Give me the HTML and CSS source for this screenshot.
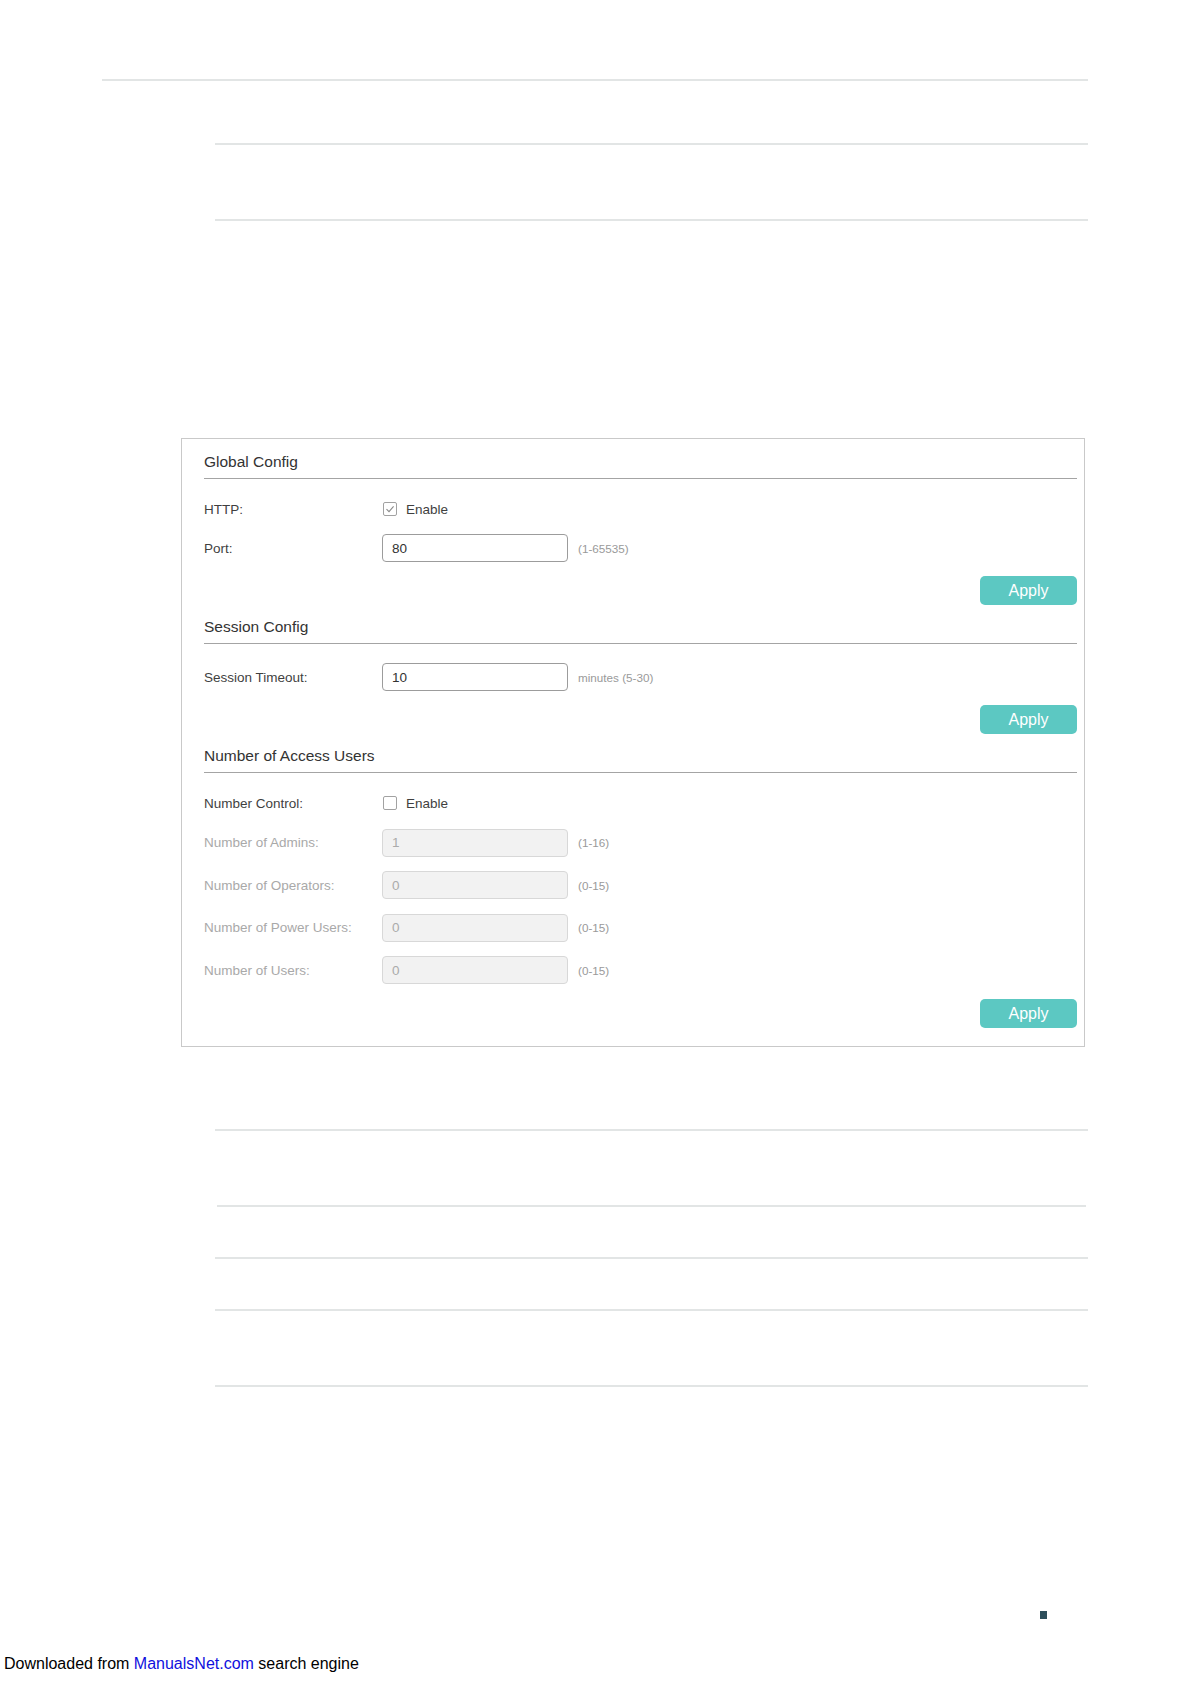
FILE: index.html
```html
<!DOCTYPE html>
<html lang="en">
<head>
<meta charset="utf-8">
<title>HTTP Config</title>
<link rel="stylesheet" href="styles.css">
</head>
<body>
<div class="page">
  <div class="rule rule-wide"></div>
  <div class="rule rule-indent gap-62"></div>
  <div class="rule rule-indent gap-74"></div>

  <div class="panel">
    <section class="section first">
      <h2 class="section-title">Global Config</h2>
      <div class="fields">
        <div class="row check-row">
          <span class="label">HTTP:</span>
          <label class="check">
            <span class="box checked">
              <svg viewBox="0 0 14 14" width="14" height="14"><path d="M3.5 7.2 L6 9.6 L10.6 4.4" fill="none" stroke="#8a8a8a" stroke-width="1.1"/></svg>
            </span>
            <span class="check-text">Enable</span>
          </label>
        </div>
        <div class="row">
          <span class="label">Port:</span>
          <span class="input">80</span>
          <span class="hint">(1-65535)</span>
        </div>
      </div>
      <div class="actions"><button class="apply">Apply</button></div>
    </section>

    <section class="section">
      <h2 class="section-title">Session Config</h2>
      <div class="fields">
        <div class="row">
          <span class="label">Session Timeout:</span>
          <span class="input">10</span>
          <span class="hint">minutes (5-30)</span>
        </div>
      </div>
      <div class="actions"><button class="apply">Apply</button></div>
    </section>

    <section class="section">
      <h2 class="section-title">Number of Access Users</h2>
      <div class="fields loose">
        <div class="row check-row">
          <span class="label">Number Control:</span>
          <label class="check">
            <span class="box"></span>
            <span class="check-text">Enable</span>
          </label>
        </div>
        <div class="row disabled">
          <span class="label">Number of Admins:</span>
          <span class="input">1</span>
          <span class="hint">(1-16)</span>
        </div>
        <div class="row disabled">
          <span class="label">Number of Operators:</span>
          <span class="input">0</span>
          <span class="hint">(0-15)</span>
        </div>
        <div class="row disabled">
          <span class="label">Number of Power Users:</span>
          <span class="input">0</span>
          <span class="hint">(0-15)</span>
        </div>
        <div class="row disabled">
          <span class="label">Number of Users:</span>
          <span class="input">0</span>
          <span class="hint">(0-15)</span>
        </div>
      </div>
      <div class="actions last"><button class="apply">Apply</button></div>
    </section>
  </div>

  <div class="rule rule-indent gap-82"></div>
  <div class="rule rule-indent rule-short gap-74"></div>
  <div class="rule rule-indent gap-50"></div>
  <div class="rule rule-indent gap-50"></div>
  <div class="rule rule-indent gap-74"></div>

  <div class="page-mark"></div>

  <p class="footer">Downloaded from <a href="#" class="footer-link">ManualsNet.com</a> search engine</p>
</div>
</body>
</html>
```

FILE: styles.css
```css
* { box-sizing: border-box; }

html, body {
  margin: 0;
  padding: 0;
  background: #ffffff;
}

body {
  font-family: "Liberation Sans", Arial, sans-serif;
  color: #333333;
}

.page {
  width: 1191px;
  min-height: 1684px;
  padding-top: 79px;
  display: flex;
  flex-direction: column;
}

.rule {
  height: 2px;
  background: #e2e5e5;
  flex: none;
}

.rule-wide {
  margin-left: 102px;
  width: 986px;
}

.rule-indent {
  margin-left: 215px;
  width: 873px;
}

.rule-indent.rule-short {
  margin-left: 217px;
  width: 869px;
}

.gap-50 { margin-top: 50px; }
.gap-62 { margin-top: 62px; }
.gap-74 { margin-top: 74px; }
.gap-82 { margin-top: 82px; }

/* panel */
.panel {
  margin-top: 217px;
  margin-left: 181px;
  width: 904px;
  border: 1px solid #c9c9c9;
  padding: 0 7px 18px 22px;
  display: flex;
  flex-direction: column;
}

.section {
  display: flex;
  flex-direction: column;
  margin-top: 12px;
}

.section.first {
  margin-top: 13px;
}

.section-title {
  margin: 0;
  font-size: 15.5px;
  font-weight: normal;
  line-height: 20px;
  color: #333333;
  padding-bottom: 6px;
  border-bottom: 1px solid #a4a4a4;
}

.fields {
  margin-top: 19px;
  display: flex;
  flex-direction: column;
  gap: 14px;
}

.fields.loose {
  gap: 14.5px;
}

.row {
  display: flex;
  align-items: center;
  height: 28px;
  font-size: 13.5px;
}

.row.check-row {
  height: 22px;
}

.label {
  width: 178px;
  flex: none;
  color: #3f3f3f;
}

.input {
  width: 186px;
  height: 28px;
  flex: none;
  border: 1px solid #9c9c9c;
  border-radius: 4px;
  padding: 0 9px;
  display: flex;
  align-items: center;
  color: #333333;
  font-size: 13.5px;
}

.hint {
  margin-left: 10px;
  font-size: 11.7px;
  color: #9a9a9a;
}

.row.disabled .label {
  color: #a9a9a9;
}

.row.disabled .input {
  background: #f2f2f2;
  border-color: #d8d8d8;
  color: #ababab;
}

.check {
  display: flex;
  align-items: center;
  margin-left: 1px;
}

.box {
  width: 14px;
  height: 14px;
  border: 1px solid #a2a2a2;
  border-radius: 2px;
  display: flex;
  align-items: center;
  justify-content: center;
  overflow: hidden;
}

.box svg {
  display: block;
  flex: none;
}

.check-text {
  margin-left: 9px;
  color: #3f3f3f;
  font-size: 13.5px;
}

.actions {
  margin-top: 14px;
  display: flex;
  justify-content: flex-end;
}

.actions.last {
  margin-top: 15px;
}

.apply {
  width: 97px;
  height: 29px;
  border: none;
  border-radius: 5px;
  background: #5cc8c2;
  color: #ffffff;
  font-family: "Liberation Sans", Arial, sans-serif;
  font-size: 16px;
  padding: 0;
  line-height: 29px;
}

.page-mark {
  margin-top: 224px;
  margin-left: 1040px;
  width: 7px;
  height: 8px;
  background: #2d4e5b;
  flex: none;
}

.footer {
  margin: 36px 0 0 4px;
  font-size: 16px;
  line-height: 18px;
  color: #000000;
}

.footer-link {
  color: #1010dd;
  text-decoration: none;
}
```
